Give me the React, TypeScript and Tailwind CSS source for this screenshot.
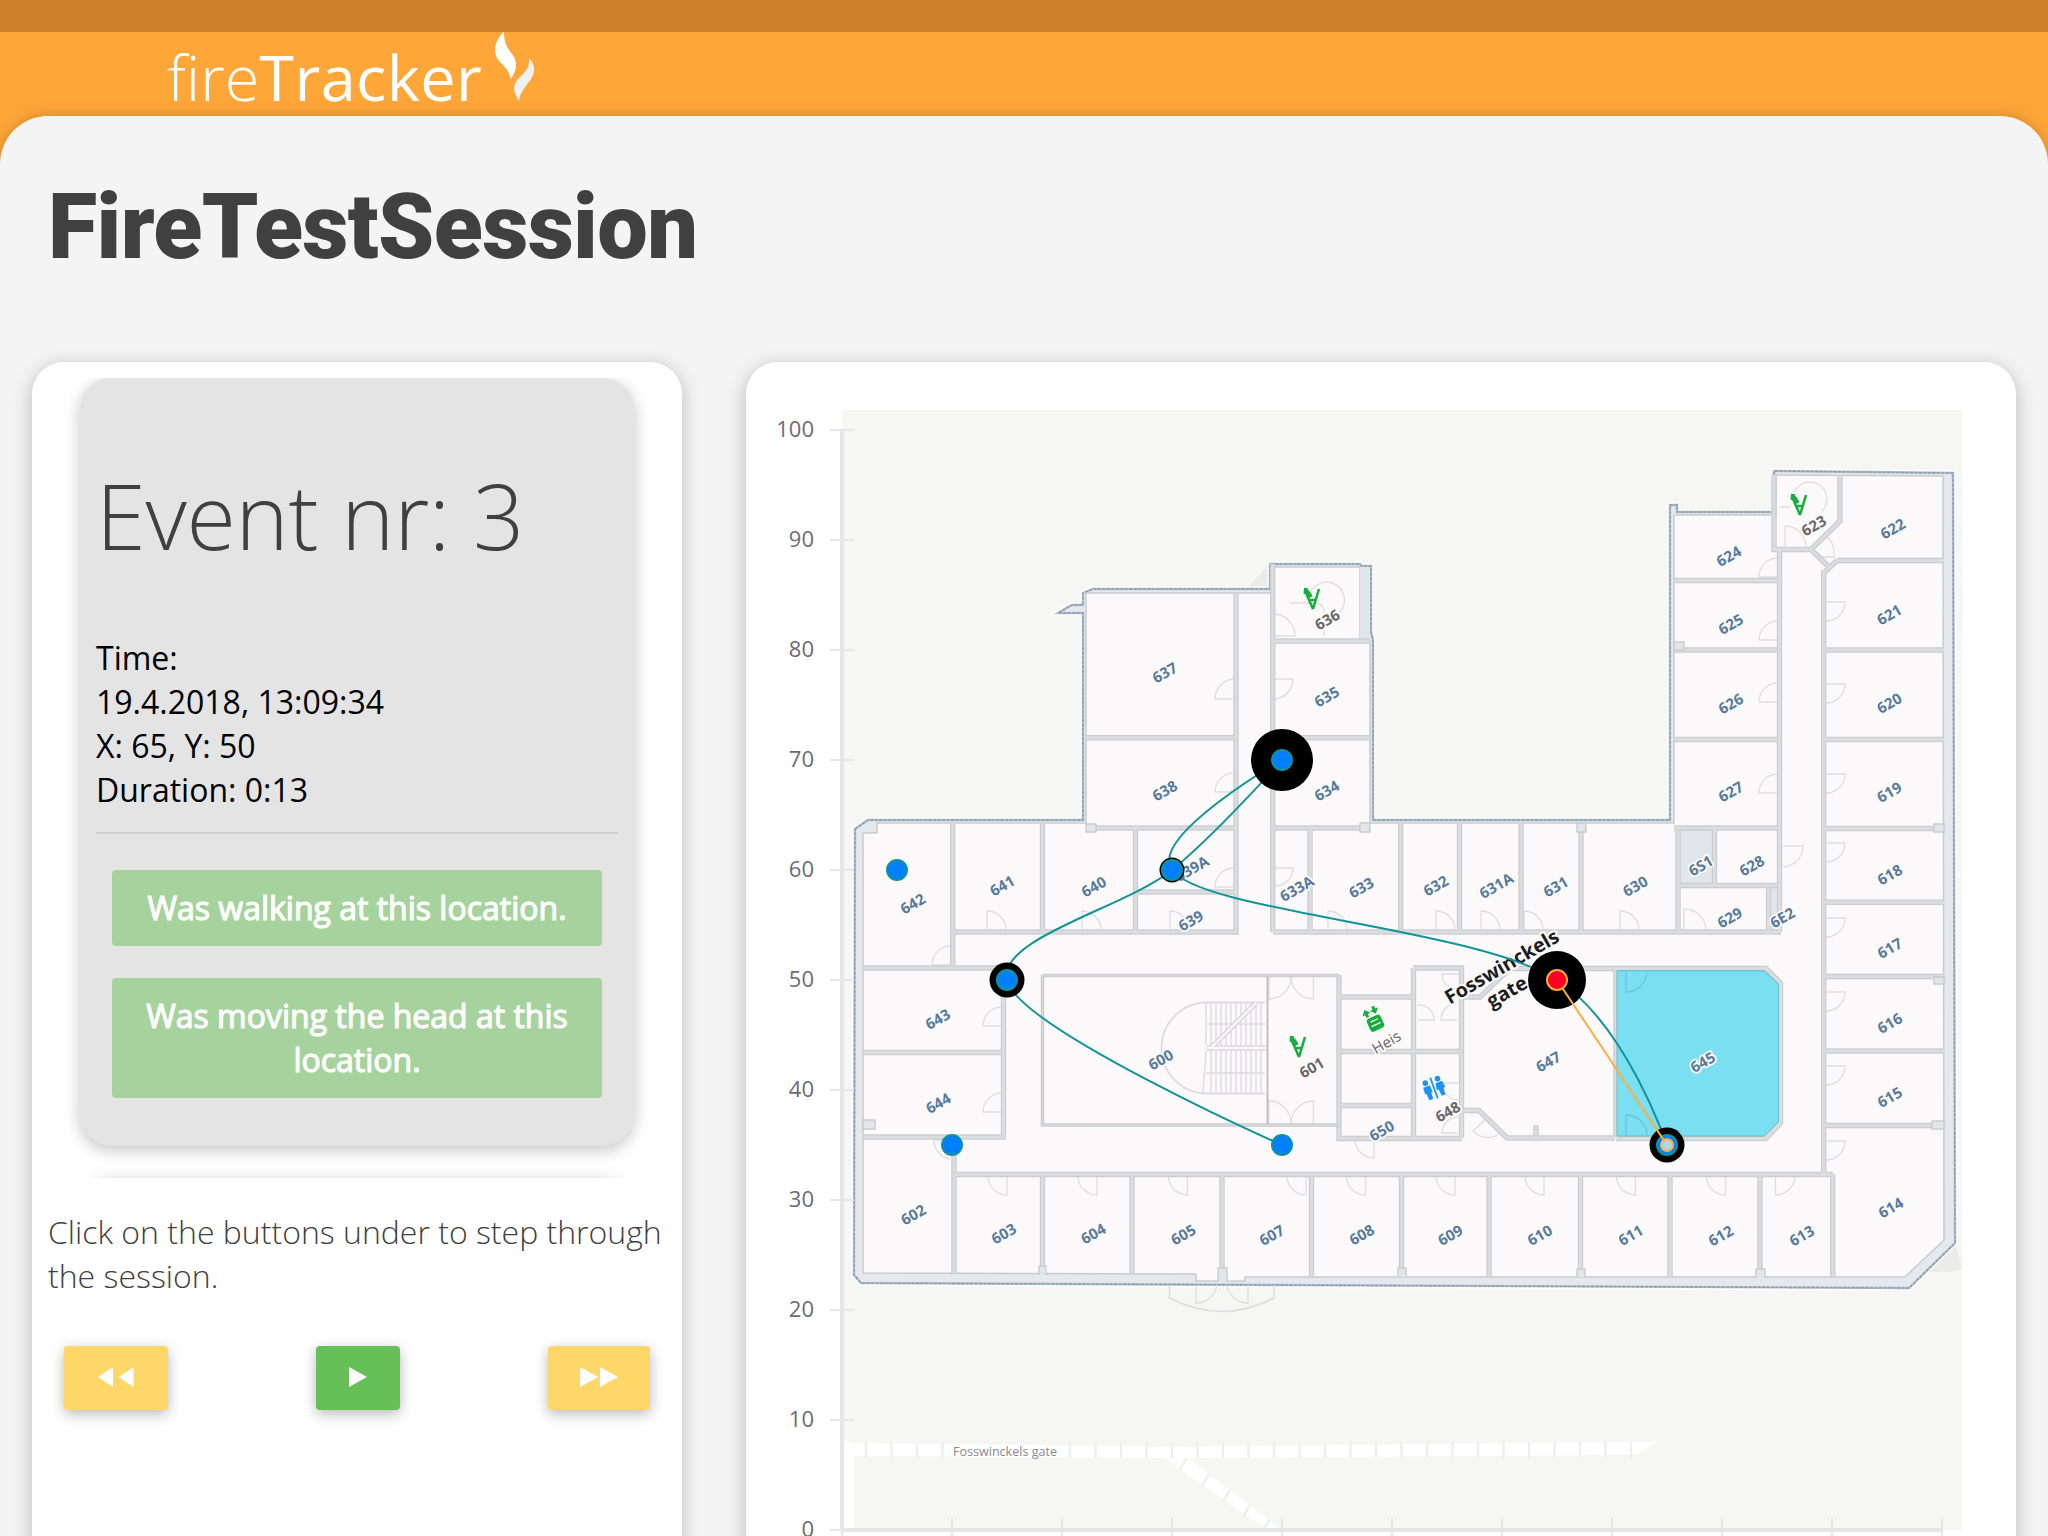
import React from "react";

type Pt = [number, number];

/* ---------- chart data ---------- */
const sx = (v: number) => 842 + v * 11;
const sy = (v: number) => 1530 - v * 11;

const trail: Pt[] = [[40, 35], [15, 50], [30, 60], [40, 70], [30, 60], [65, 50], [75, 35]];

const ALPHA = 0.25;

// Catmull-Rom spline through the given points
function spline(points: Pt[]): string {
  const n = points.length;
  let d = `M${points[0][0]},${points[0][1]}`;
  const tangents = points.map((p, i): [Pt, Pt] => {
    if (i === 0 || i === n - 1) return [p, p];
    const a = points[i - 1];
    const b = points[i + 1];
    const d1: Pt = [a[0] - p[0], a[1] - p[1]];
    const d2: Pt = [b[0] - p[0], b[1] - p[1]];
    const l1 = Math.pow(Math.hypot(d1[0], d1[1]), ALPHA);
    const l2 = Math.pow(Math.hypot(d2[0], d2[1]), ALPHA);
    const nx = l2 * l2 * d1[0] - l1 * l1 * d2[0];
    const ny = l2 * l2 * d1[1] - l1 * l1 * d2[1];
    const k1 = 3 * l2 * (l1 + l2);
    const k2 = 3 * l1 * (l1 + l2);
    return [[p[0] + nx / k1, p[1] + ny / k1], [p[0] - nx / k2, p[1] - ny / k2]];
  });
  for (let i = 1; i < n; i++) {
    const c1 = tangents[i - 1][1];
    const c2 = tangents[i][0];
    d += `C${c1[0]},${c1[1]} ${c2[0]},${c2[1]} ${points[i][0]},${points[i][1]}`;
  }
  return d;
}

/* ---------- floor plan ---------- */
const outline =
  "M855,829L868,820H1083V613H1058L1072,605H1083V593L1093,589H1270V564H1360L1361,566H1371V632L1373,640V820H1670V505H1677V512H1774V471L1953,473L1955,1243L1909,1288L861,1283L854,1275Z";
const floor =
  "M863,833H877V823H1086V593H1274V567H1360V641H1370V823H1674V515H1776V475L1943,476L1944,1240L1905,1277L1245,1277V1281H1196V1274L863,1273Z";

const walls = [
  "M952.7,823V967M863,968H1003.5V1137M863,1052.5H1003M863,1137H1006M954,1137V1273M954,1174.5H1833",
  "M952,932H1236V593M1042.5,823V932M1135.5,828V932M1135,892H1235M1086,828H1236M1086,737.7H1236",
  "M1272.7,564V932M1273,641H1370M1273,737.7H1370M1273,828H1360M1310,828V932M1400.7,823V932M1459.5,823V932M1521,823V932M1581,823V932",
  "M1273,932H1781M1678,826V932M1714.5,828V885M1680,885.5H1780M1768.5,885V932M1779.5,549V932M1674,828H1779",
  "M1823.7,570V1174M1837,560.5H1944M1823,650H1944M1823,739.5H1944M1823,828.5H1944M1823,902.3H1944M1823,976.5H1944M1823,1051H1944M1823,1125.5H1944",
  "M1674,580.5H1779M1674,650H1779M1674,739.5H1779M1774,475V549.5H1811L1840,521V475M1811,549.5L1829,567M1823.7,573L1837,560.5",
  "M1042.5,1174V1274M1132,1174V1274M1222,1174V1282M1311.5,1174V1276M1401.5,1174V1276M1489,1174V1276M1580.5,1174V1276M1670,1174V1277M1760,1174V1277M1832.7,1174V1277",
  "M1339,975V1138.5H1462M1339,997H1413M1413.5,968V1138M1413,968H1461.5V1138M1341,1051.5H1461M1341,1105.5H1413",
  "M1462,1110.5H1479L1507,1138H1615M1616,968V1138M1462,997H1480L1510,968.5H1766L1780.5,983V1123L1766,1138.5H1616M1536,1125V1138",
].join("");

const thinWalls = "M1042.5,975.5H1339M1042.5,975V1125H1339";

// hinge, leaf end, closing end
const doors: number[][] = [
  ...[987, 1082, 1170, 1328, 1436, 1481, 1524, 1620].map((x) => [x, 929, x, 911, x + 19, 929]),
  [950, 965, 932, 965, 950, 946],
  [1001, 1026, 983, 1026, 1001, 1007],
  [1001, 1112, 983, 1112, 1001, 1093],
  [1233, 887, 1215, 887, 1233, 868],
  [1233, 699, 1215, 699, 1233, 679],
  [1233, 792, 1215, 792, 1233, 773],
  [1275, 679, 1293, 679, 1275, 699],
  [1275, 636, 1295, 636, 1275, 614],
  [1275, 868, 1293, 868, 1275, 886],
  ...[1007, 1097, 1187.5, 1306, 1365.5, 1455, 1544, 1635.5, 1725.5].map((x) => [x, 1177, x, 1195, x - 19, 1177]),
  [1775.5, 1177, 1775.5, 1195, 1795, 1177],
  ...[602, 684, 774, 843, 918, 992, 1066, 1141].map((y) => [1826, y, 1845, y, 1826, y + 19]),
  [1783, 846, 1803, 846, 1783, 867],
  ...[577, 640, 702, 793].map((y) => [1777, y, 1759, y, 1777, y - 19]),
  [1684, 930, 1684, 909, 1706, 930],
  [1269, 977, 1269, 999, 1291, 977],
  [1313.5, 977, 1313.5, 999, 1291, 977],
  [1269, 1123, 1269, 1101, 1291, 1123],
  [1313.5, 1123, 1313.5, 1101, 1291, 1123],
  [1374, 1140, 1374, 1158, 1355, 1140],
  [1418, 1020, 1434, 1020, 1418, 1005],
  [1457, 1020, 1441, 1020, 1457, 1003],
  [1458, 974, 1442, 974, 1458, 989],
  [1458, 1083, 1442, 1083, 1458, 1100],
  [1458, 1133, 1442, 1133, 1458, 1117],
  [950, 1140, 934, 1140, 950, 1159],
  [1785, 547, 1785, 526, 1806, 547],
  [1822, 557, 1834, 557, 1826, 536],
  [1196, 1285, 1196, 1303, 1217, 1285],
  [1248, 1285, 1248, 1303, 1227, 1285],
  [1487, 1118, 1473, 1131, 1499, 1134],
];
const poolDoors: number[][] = [
  [1626, 972, 1626, 992, 1647, 972],
  [1626, 1135, 1626, 1115, 1647, 1135],
];

function doorPath([hx, hy, lx, ly, cx, cy]: number[]): string {
  const r = Math.hypot(cx - hx, cy - hy);
  const sweep = (lx - hx) * (cy - hy) - (ly - hy) * (cx - hx) > 0 ? 1 : 0;
  return `M${hx},${hy}L${lx},${ly}A${r},${r} 0 0 ${sweep} ${cx},${cy}`;
}

const rooms: [string, number, number][] = [
  ["637", 1165, 673], ["638", 1165, 791], ["635", 1327, 697], ["634", 1327, 791],
  ["624", 1729, 556.5], ["625", 1731, 624.5], ["626", 1731, 704], ["627", 1731, 792],
  ["622", 1893, 529], ["621", 1889.5, 615], ["620", 1889.5, 703.5], ["619", 1889.5, 792.5],
  ["618", 1890, 875], ["617", 1890, 948.5], ["616", 1890, 1023.5], ["615", 1890, 1097.5], ["614", 1891, 1208],
  ["642", 913, 904], ["641", 1002.5, 886], ["640", 1094, 887], ["639A", 1192, 869], ["639", 1191, 921],
  ["643", 938, 1019.5], ["644", 938.5, 1103.5], ["602", 913.5, 1215],
  ["603", 1004, 1234], ["604", 1093.5, 1234], ["605", 1183.5, 1235], ["607", 1272, 1235.5], ["608", 1362, 1235],
  ["609", 1450.5, 1235.5], ["610", 1540, 1235.5], ["611", 1631, 1235.5], ["612", 1721, 1236], ["613", 1802, 1236],
  ["600", 1161, 1060], ["633A", 1297, 889], ["633", 1361.5, 888], ["632", 1436, 886], ["631A", 1496.5, 886],
  ["631", 1556, 887], ["630", 1635.5, 886.5], ["6S1", 1701, 866], ["628", 1752, 866], ["629", 1730, 918],
  ["6E2", 1782.5, 918], ["647", 1548.5, 1062], ["645", 1703, 1062.5], ["650", 1382, 1131],
];
const darkRooms: [string, number, number][] = [
  ["636", 1327.5, 620], ["623", 1814, 526], ["601", 1312, 1068], ["648", 1448, 1112], ["Heis", 1386.5, 1042.5],
];

const blueDots: Pt[] = [[5, 60], [10, 35], [40, 35], [30, 60], [15, 50], [40, 70]];

const StairsMark = ({ x, y }: { x: number; y: number }) => (
  <g transform={`translate(${x} ${y})`} fill="none" stroke="#17ad3c">
    <path d="M-6,-5L1,11M7,-9L1,11M-2,2L4,2" strokeWidth="2.500" />
    <path d="M-6,-10L-6.500,-4M-5,-7L-1,-1" strokeWidth="4" />
  </g>
);

function MapLabel({ t, x, y, dark }: { t: string; x: number; y: number; dark?: boolean }) {
  return (
    <text
      transform={`translate(${x} ${y}) rotate(-30)`}
      textAnchor="middle"
      dy="5"
      fontSize="15"
      fontWeight={t === "Heis" ? 500 : 700}
      fill={dark ? "#6b6664" : "#56799c"}
      stroke="#fbfafb"
      strokeWidth="3.5"
      strokeLinejoin="round"
      paintOrder="stroke"
    >
      {t}
    </text>
  );
}

function FloorPlan() {
  return (
    <g>
      <rect x="842" y="410" width="1120" height="1120" fill="#f6f6f4" />
      <path d="M1270,563V589H1247ZM1955,1243L1962,1269L1952,1272H1927Z" fill="#ebebe9" />

      {/* street */}
      <path d="M844,1440L854,1443V1530H844Z" fill="#fff" />
      <path d="M846,1443L1172,1447L1657,1441.5L1637,1455L1188,1458L1282,1530H1267L1164,1458L853,1456Z" fill="#fff" />
      <g stroke="#ecf0ef" strokeWidth="2.500">
        {Array.from({ length: 31 }, (_, i) => 866 + i * 25.5).map((x) =>
          x > 945 && x < 1065 ? null : <path key={x} d={`M${x},1442V1458`} />
        )}
        <path d="M1180,1470L1187,1458M1202,1486L1209,1474M1223,1502L1230,1490M1243,1517L1250,1505M1263,1531L1270,1519" />
      </g>
      <text x="953" y="1456" fontSize="13" fill="#8a8a8a" textLength="104" lengthAdjust="spacingAndGlyphs">
        Fosswinckels gate
      </text>

      {/* building shell */}
      <path d={outline} fill="#e5e9ed" stroke="#fff" strokeWidth="6" opacity="0.7" />
      <path d={outline} fill="#e5e9ed" stroke="#b4c1cd" strokeWidth="2.4" />
      <path d={outline} fill="none" stroke="#879bae" strokeWidth="1.4" strokeDasharray="3 1.5" />
      <path d={floor} fill="#fbf9fa" stroke="#c9cbcd" strokeWidth="1.5" />
      <path d="M1360,567H1370V640H1360ZM1680,828H1714V885H1680ZM1769,886H1780V931H1769Z" fill="#e1e6ea" />

      <g fill="none" stroke="#dedee0" strokeWidth="1.3">
        {doors.map((d, i) => <path key={i} d={doorPath(d)} />)}
        <path d="M1309,596A18,18 0 1 1 1338,614" />
        <path d="M1794,493A17,17 0 1 1 1822,511" />
        <path d="M1290,603H1316Q1324,604 1324,612V636M1780,507H1790" />
        <path d="M1169.5,1285V1298Q1222,1325 1274,1298V1285" strokeWidth="1.6" />
      </g>

      {/* central stairs */}
      <g fill="none" stroke="#dcdcde" strokeWidth="1.4">
        <path d="M1265,1002.5H1207A45.5,45.5 0 0 0 1207,1093.5H1265" strokeWidth="1.8" />
        <path d="M1206,1003V1045M1206,1051L1203,1093M1206,1024H1265M1206,1073H1265" />
        {Array.from({ length: 11 }, (_, i) => 1211 + i * 5).map((x) => <path key={x} d={`M${x},1003V1093`} />)}
        <path d="M1206,1048H1266M1211,1048L1256,1003" stroke="#d6d6d8" strokeWidth="5" />
        <path d="M1206,1048H1266M1211,1048L1256,1003" stroke="#fbf9fa" strokeWidth="2.4" />
      </g>

      <g fill="none">
        <path d={walls} stroke="#cbcdcf" strokeWidth="5.4" />
        <path d={walls} stroke="#d9dddf" strokeWidth="3" />
        <path d={thinWalls} stroke="#c9cbcd" strokeWidth="3.4" />
        <path d={thinWalls} stroke="#d6d8da" strokeWidth="1.4" />
        <path d="M1267.5,977V1124" stroke="#bdbfc1" strokeWidth="2" />
      </g>
      <g fill="#e1e6ea" stroke="#c9cbcd" strokeWidth="1.3">
        <path d="M1039,1275V1266H1046V1275M1218,1282V1268H1227V1282M1398,1277V1268H1406V1277M1577,1277V1269H1585V1277M1756,1278V1269H1765V1278" />
        <path d="M1086,824H1096V832H1086ZM1360,823H1370V832H1360ZM1577,823H1586V832H1577ZM863,1120H875V1129H863ZM1944,824H1934V832H1944ZM1944,977H1934V984H1944ZM1944,1121H1932V1129H1944ZM1674,642H1684V650H1674Z" />
      </g>

      {/* highlighted room */}
      <path d="M1617,970.7H1764L1778.5,984V1122L1764,1136H1617Z" fill="#7adff0" stroke="#63bccb" strokeWidth="1" />
      <g fill="none" stroke="#69c6d6" strokeWidth="1.3">
        {poolDoors.map((d, i) => <path key={i} d={doorPath(d)} />)}
      </g>

      {rooms.map(([t, x, y]) => <MapLabel key={t} t={t} x={x} y={y} />)}
      {darkRooms.map(([t, x, y]) => <MapLabel key={t} t={t} x={x} y={y} dark />)}

      <StairsMark x={1312} y={598} />
      <StairsMark x={1799} y={504} />
      <StairsMark x={1298} y={1046} />
      <g transform="translate(1374 1020) rotate(-25)" fill="#17ad3c">
        <rect x="-7.500" y="-3.500" width="15" height="14" rx="3" />
        <path d="M-6,-5V-8H-9L-4.500,-13L0,-8H-3V-5ZM3,-13H6V-10H9L4.500,-5L0,-10H3Z" />
        <path d="M-4,0.500H4M-5,5H5" stroke="#fff" strokeWidth="1.200" />
      </g>
      <g transform="translate(1434 1088) rotate(-20)" fill="#1a92f7" stroke="#1a92f7">
        <circle cx="-6.500" cy="-7.500" r="2.800" stroke="none" />
        <circle cx="6.500" cy="-7.500" r="2.800" stroke="none" />
        <path d="M-10,-4H-3L-2.500,3H-4L-4.500,10H-8.500L-9,3H-10.500ZM3,-4H10L11,3H9L8.500,10H4.500L4,3H2Z" stroke="none" />
        <path d="M0,-11V11" strokeWidth="1.700" />
      </g>

      <g fontSize="19.700" fontWeight="700" fill="#1c1c1c" stroke="#fbfafb" strokeWidth="4" strokeLinejoin="round" paintOrder="stroke" textAnchor="middle">
        <text transform="translate(1502 967) rotate(-30)" dy="6.500">Fosswinckels</text>
        <text transform="translate(1507 992) rotate(-30)" dy="6.500">gate</text>
      </g>
    </g>
  );
}

function Chart() {
  return (
    <svg
      className="block h-[1174px] w-[1270px] font-['Open_Sans','Noto_Sans',sans-serif]"
      viewBox="746 362 1270 1174"
    >
      <FloorPlan />
      <g stroke="#e6e6e9">
        <path d="M842,430V1530M842,1530H1942" strokeWidth="4" />
        <path
          strokeWidth="2"
          d={Array.from({ length: 11 }, (_, i) => `M830,${430 + i * 110}H854M${842 + i * 110},1518V1542`).join("")}
        />
      </g>
      <g fontSize="22" fill="#6b6b76" textAnchor="end">
        {Array.from({ length: 11 }, (_, i) => (
          <text key={i} x="814" y={sy(i * 10) + 7}>{i * 10}</text>
        ))}
      </g>

      <path d={spline(trail.map(([x, y]): Pt => [sx(x), sy(y)]))} fill="none" stroke="#12939a" strokeWidth="2" />
      <circle cx={sx(40)} cy={sy(70)} r="31" />
      <circle cx={sx(65)} cy={sy(50)} r="29" />
      <circle cx={sx(15)} cy={sy(50)} r="17.5" />
      <circle cx={sx(75)} cy={sy(35)} r="17.5" />
      <circle cx={sx(30)} cy={sy(60)} r="12.5" />
      <g fill="#0080ff" stroke="#12939a" strokeWidth="2">
        {blueDots.map(([x, y]) => <circle key={`${x}-${y}`} cx={sx(x)} cy={sy(y)} r="10" />)}
        <circle cx={sx(75)} cy={sy(35)} r="10" />
      </g>
      <path d={`M${sx(65)},${sy(50)}L${sx(75)},${sy(35)}`} stroke="#ffad42" strokeWidth="2" />
      <circle cx={sx(65)} cy={sy(50)} r="10" fill="#ff0022" stroke="#ffad42" strokeWidth="2" />
      <circle cx={sx(75)} cy={sy(35)} r="6" fill="#add8e6" stroke="#ffad42" strokeWidth="2" />
    </svg>
  );
}

/* ---------- page ---------- */
function Logo() {
  return (
    <div className="flex h-[84px] items-start pl-[167px] text-white">
      <span className="mt-[2px] font-['Open_Sans','Noto_Sans',sans-serif] text-[63px] leading-[86px] whitespace-nowrap">
        <span className="font-light">fire</span>
        <span className="font-medium tracking-[0.45px]">Tracker</span>
      </span>
      <svg className="ml-[12px] h-[70px] w-[42px]" viewBox="493 32 42 70">
        <path d="M503,31C490,46 493,56 500,63C505,68 508,72 510,79C516,70 517,62 511,54C505,46 503,42 503,31Z" fill="#fff" />
        <path d="M528,58C529,68 524,72 518,78C511,85 512,92 518,101C519,93 522,90 527,83C534,75 536,66 528,58Z" fill="#f1f1f1" />
      </svg>
    </div>
  );
}

function Tag({ children }: { children: React.ReactNode }) {
  return (
    <p className="rounded bg-[#a6d39d] p-4 text-center text-[32px] leading-[44px] text-white [-webkit-text-stroke:1.1px_white]">
      {children}
    </p>
  );
}

const btn = "flex h-16 items-center justify-center rounded pb-0.5 shadow-[0_4px_14px_rgba(0,0,0,0.28)]";

function EventPanel() {
  return (
    <section className="h-[1300px] w-[650px] shrink-0 rounded-[32px] bg-white pt-4 shadow-[0_4px_20px_rgba(0,0,0,0.24)]">
      <div className="h-[800px] overflow-hidden px-12">
        <article className="h-[768px] rounded-[32px] bg-[#e4e4e4] px-4 shadow-[0_4px_16px_rgba(0,0,0,0.24)]">
          <h2 className="pt-[75px] text-[90px] leading-[124px] font-light tracking-[-0.3px] text-[#404040]">Event nr: 3</h2>
          <div className="mt-[59px] text-[32px] leading-[44px] text-black">
            <p>Time:</p>
            <p>19.4.2018, 13:09:34</p>
            <p>X: 65, Y: 50</p>
            <p>Duration: 0:13</p>
          </div>
          <hr className="mt-5 border-t-2 border-[#cfcfcf]" />
          <div className="mx-4 mt-9 flex flex-col gap-8">
            <Tag>Was walking at this location.</Tag>
            <Tag>Was moving the head at this location.</Tag>
          </div>
        </article>
        <article className="mt-8 h-[200px] rounded-[32px] bg-[#e4e4e4] shadow-[0_4px_16px_rgba(0,0,0,0.24)]" />
      </div>
      <p className="mt-8 px-4 text-[32px] leading-[44px] font-light text-[#404040]">
        Click on the buttons under to step through the session.
      </p>
      <div className="mt-12 flex justify-between px-8">
        <button className={`${btn} w-[104px] bg-[#ffd668]`}>
          <svg className="h-5 w-9" viewBox="0 0 36 20" fill="#fff"><path d="M15,0V20L0,10ZM35.500,0V20L20.500,10Z" /></svg>
        </button>
        <button className={`${btn} w-[84px] bg-[#66bf57]`}>
          <svg className="h-5 w-[18px]" viewBox="0 0 18 20" fill="#fff"><path d="M0,0V20L18,10Z" /></svg>
        </button>
        <button className={`${btn} w-[102px] bg-[#ffd668]`}>
          <svg className="h-5 w-[38px]" viewBox="0 0 38 20" fill="#fff"><path d="M0,0V20L18,10ZM20,0V20L38,10Z" /></svg>
        </button>
      </div>
    </section>
  );
}

export default function App() {
  return (
    <div className="h-[1536px] w-[2048px] overflow-hidden bg-[#ffa638] font-['Open_Sans','Noto_Sans',sans-serif]">
      <div className="h-8 bg-[#cc8029]" />
      <Logo />
      <main className="h-[1420px] rounded-t-[48px] bg-[#f4f4f4] px-8 shadow-[0_0_16px_rgba(0,0,0,0.2)]">
        <h1 className="pt-[59px] pl-4 font-['Roboto',sans-serif] text-[90px] leading-[106px] font-black tracking-[-0.65px] text-[#404040]">
          FireTestSession
        </h1>
        <div className="mt-[81px] flex gap-16">
          <EventPanel />
          <section className="h-[1300px] w-[1270px] shrink-0 rounded-[32px] bg-white shadow-[0_4px_20px_rgba(0,0,0,0.24)]">
            <Chart />
          </section>
        </div>
      </main>
    </div>
  );
}
